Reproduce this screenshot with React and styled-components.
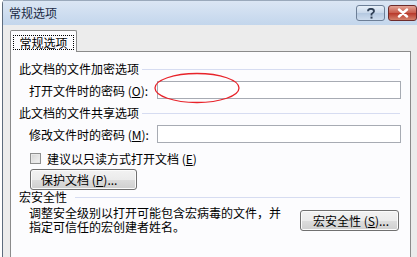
import React from "react"
import styled, { createGlobalStyle } from "styled-components"

const Global = createGlobalStyle`
  html, body {
    margin: 0;
    padding: 0;
    background: #ffffff;
    overflow: hidden;
  }
  body {
    font-family: "Noto Sans CJK SC", "Liberation Sans", sans-serif;
    font-size: 12px;
    color: #000;
  }
`

const Page = styled.div`
  width: 417px;
  height: 257px;
  padding-left: 2px;
  box-sizing: border-box;
  overflow: hidden;
`

const Window = styled.div`
  height: 100%;
  border-left: 1px solid #5d6b7d;
  border-top-left-radius: 4px;
  display: flex;
  flex-direction: column;
  background: #ececec;
`

const TitleBar = styled.div`
  height: 25px;
  flex-shrink: 0;
  display: flex;
  align-items: center;
  padding-left: 6px;
  background: linear-gradient(#dbe6f4, #c3d6ec);
  border-top: 1px solid #9aa9bb;
  box-sizing: border-box;
`

const Title = styled.span`
  flex: 1;
  font-size: 12px;
  line-height: 14px;
  color: #1b2a44;
`

const CaptionButton = styled.div`
  width: 29px;
  height: 16px;
  margin-left: ${props => props.gap || "0px"};
  border: 1px solid ${props => (props.close ? "#6d2b2b" : "#6d7f97")};
  border-radius: 3px;
  box-sizing: border-box;
  display: flex;
  align-items: center;
  justify-content: center;
  background: ${props =>
    props.close
      ? "linear-gradient(#e4a496, #c75a4a 50%, #b8382a 51%, #d3826c)"
      : "linear-gradient(#e7eff8, #c7d7ea 50%, #b4c8e0 51%, #cddcee)"};
`

const Body = styled.div`
  flex: 1;
  display: flex;
  flex-direction: column;
  padding: 5px 6px 0 7px;
`

const TabRow = styled.div`
  display: flex;
  position: relative;
  z-index: 1;
  margin-bottom: -1px;
`

const Tab = styled.div`
  width: 67px;
  height: 22px;
  box-sizing: border-box;
  border: 1px solid #8b8b8b;
  border-bottom: none;
  border-radius: 2px 2px 0 0;
  background: #fcfcfe;
  display: flex;
  align-items: center;
  justify-content: center;
  padding-top: 1px;
`

const TabLabel = styled.span`
  outline: 1px dotted #000;
  padding: 0 5px;
  line-height: 13px;
`

const Panel = styled.div`
  flex: 1;
  border: 1px solid #8b8b8b;
  border-bottom: none;
  background: #fcfcfe;
  padding: 10px 9px 0 8px;
  display: flex;
  flex-direction: column;
`

const Heading = styled.div`
  display: flex;
  align-items: center;
  line-height: 14px;
  height: 14px;
  margin-top: ${props => props.mt || "0px"};
  margin-right: 1px;
  &::after {
    content: "";
    flex: 1;
    height: 1px;
    background: #d6dcf1;
    margin-left: ${props => props.lineGap || "3px"};
  }
`

const FieldRow = styled.div`
  display: flex;
  align-items: center;
  height: 18px;
  margin-top: ${props => props.mt || "5px"};
  padding-left: 10px;
`

const Label = styled.span`
  width: 128px;
  flex-shrink: 0;
  white-space: nowrap;
`

const InputWrap = styled.div`
  flex: 1;
  position: relative;
  height: 18px;
`

const Input = styled.div`
  height: 100%;
  box-sizing: border-box;
  border: 1px solid #a7abb3;
  background: #fff;
`

const Ellipse = styled.svg`
  position: absolute;
  left: -3px;
  top: -8px;
  overflow: visible;
`

const CheckRow = styled.label`
  display: flex;
  align-items: center;
  height: 14px;
  margin-top: 8px;
  padding-left: 11px;
  gap: 6px;
`

const Box = styled.span`
  width: 11px;
  height: 11px;
  box-sizing: border-box;
  border: 1px solid #8e8f8f;
  background: linear-gradient(135deg, #d4d4d4, #f4f4f4);
  box-shadow: inset 0 0 0 1px #e8e8e8;
`

const Button = styled.div`
  width: ${props => props.w};
  height: 21px;
  box-sizing: border-box;
  border: 1px solid #707070;
  border-radius: 3px;
  background: linear-gradient(#f2f2f2, #ebebeb 50%, #dddddd 51%, #cfcfcf);
  box-shadow: inset 0 0 0 1px #fbfbfb;
  display: flex;
  align-items: center;
  padding-left: ${props => props.pl || "10px"};
  white-space: nowrap;
  flex-shrink: 0;
`

const ButtonRow = styled.div`
  display: flex;
  margin-top: 4px;
  padding-left: 11px;
`

const MacroRow = styled.div`
  display: flex;
  align-items: flex-start;
  justify-content: space-between;
  margin-top: 2px;
  padding-left: 10px;
  padding-right: 2px;
`

const Description = styled.div`
  line-height: 14px;
  width: 260px;
`

const MacroButton = styled(Button)`
  margin-top: 4px;
`

const Key = styled.u`
  text-underline-offset: 1px;
`

export default () => (
  <Page>
    <Global />
    <Window>
      <TitleBar>
        <Title>常规选项</Title>
        <CaptionButton>
          <svg width="10" height="11" viewBox="0 0 10 11">
            <path
              d="M2 3.2 C2 1.4 3.4 0.8 5 0.8 C6.8 0.8 8 1.8 8 3.2 C8 4.6 6.4 5 5.5 6 L5.5 7.4"
              fill="none"
              stroke="#2f3f55"
              strokeWidth="1.8"
            />
            <rect x="4.5" y="8.6" width="2" height="2" fill="#2f3f55" />
          </svg>
        </CaptionButton>
        <CaptionButton close gap="3px">
          <svg width="12" height="10" viewBox="0 0 12 10">
            <path
              d="M2 1.5 L10 8.5 M10 1.5 L2 8.5"
              stroke="#fff"
              strokeWidth="2.4"
              strokeLinecap="round"
            />
          </svg>
        </CaptionButton>
      </TitleBar>
      <Body>
        <TabRow>
          <Tab>
            <TabLabel>常规选项</TabLabel>
          </Tab>
        </TabRow>
        <Panel>
          <Heading>此文档的文件加密选项</Heading>
          <FieldRow>
            <Label>
              打开文件时的密码 (<Key>O</Key>):
            </Label>
            <InputWrap>
              <Input />
              <Ellipse width="86" height="30" viewBox="0 0 86 30">
                <ellipse
                  cx="43"
                  cy="15"
                  rx="42"
                  ry="14.5"
                  fill="none"
                  stroke="#e8232a"
                  strokeWidth="1.3"
                />
              </Ellipse>
            </InputWrap>
          </FieldRow>
          <Heading mt="7px">此文档的文件共享选项</Heading>
          <FieldRow>
            <Label>
              修改文件时的密码 (<Key>M</Key>):
            </Label>
            <InputWrap>
              <Input />
            </InputWrap>
          </FieldRow>
          <CheckRow>
            <Box />
            <span>
              建议以只读方式打开文档 (<Key>E</Key>)
            </span>
          </CheckRow>
          <ButtonRow>
            <Button w="107px">
              保护文档 (<Key>P</Key>)...
            </Button>
          </ButtonRow>
          <Heading lineGap="8px">宏安全性</Heading>
          <MacroRow>
            <Description>
              调整安全级别以打开可能包含宏病毒的文件，并
              <br />
              指定可信任的宏创建者姓名。
            </Description>
            <MacroButton w="99px" pl="12px">
              宏安全性 (<Key>S</Key>)...
            </MacroButton>
          </MacroRow>
        </Panel>
      </Body>
    </Window>
  </Page>
)
